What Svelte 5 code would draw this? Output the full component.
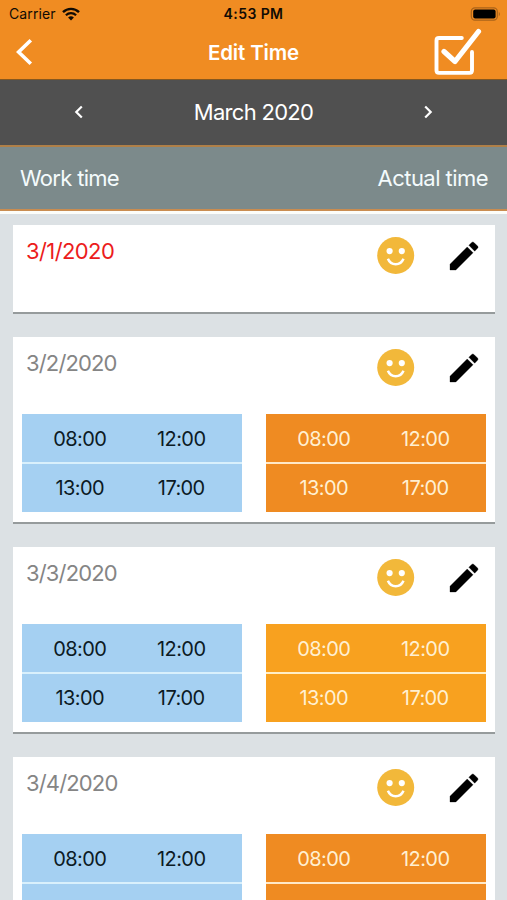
<script>
  const slots = [
    ['08:00', '12:00'],
    ['13:00', '17:00'],
  ];
  const days = [
    { date: '3/1/2020', holiday: true },
    { date: '3/2/2020', slots, tone: 'deep' },
    { date: '3/3/2020', slots, tone: 'bright' },
    { date: '3/4/2020', slots, tone: 'deep' },
  ];
</script>

{#snippet times(rows, tone)}
  <div class="times {tone}">
    {#each rows as row}
      <div class="row">
        {#each row as time}<span>{time}</span>{/each}
      </div>
    {/each}
  </div>
{/snippet}

<div class="screen">
  <header>
    <div class="status">
      <div class="carrier">
        <span class="name">Carrier</span>
        <svg width="18" height="14" viewBox="0 0 18 14" fill="none" stroke="#100b04">
          <path d="M1 5.2C5.5.7 12.5.7 17 5.2" stroke-width="2.4" />
          <path d="M3.9 8.2C6.8 5.4 11.2 5.4 14.1 8.2" stroke-width="2.2" />
          <path d="M9 13.5 6.1 10.5Q9 8.1 11.9 10.5Z" fill="#100b04" stroke="none" />
        </svg>
      </div>
      <span class="clock">4:53 PM</span>
      <svg class="battery" width="31" height="14" viewBox="0 0 31 14">
        <rect x="1.3" y=".8" width="26" height="12.4" rx="3.6" fill="none" stroke="#a9631a" stroke-width="1.2" />
        <rect x="3.2" y="2.4" width="22.4" height="9.2" rx="2" fill="#000" />
        <path d="M28.8 4.7q2.2 2.3 0 4.6z" fill="#a9631a" />
      </svg>
    </div>
    <div class="nav">
      <svg width="18" height="28" viewBox="0 0 18 28" fill="none" stroke="#fff" stroke-width="3.6">
        <path d="M15.8 2.2 3.6 14 15.8 25.8" />
      </svg>
      <h1>Edit Time</h1>
      <svg class="check" width="50" height="50" viewBox="0 0 50 50" fill="none" stroke="#fff" stroke-linecap="round" stroke-linejoin="round">
        <path d="M28.8 11H6Q3.500 11 3.500 13.500V43.200Q3.500 45.900 6 45.900H36.500Q39 45.900 39 43.200V25" stroke-width="3.9" />
        <path d="M11 24.500 22 34.500 45.500 4.500" stroke-width="5.2" />
      </svg>
    </div>
  </header>

  <div class="month">
    <svg width="10" height="14" viewBox="0 0 10 14" fill="none" stroke="#fff" stroke-width="2.2"><path d="M7.8 1.5 2.3 7l5.5 5.5" /></svg>
    <span>March 2020</span>
    <svg width="10" height="14" viewBox="0 0 10 14" fill="none" stroke="#fff" stroke-width="2.2"><path d="M2.2 1.5 7.7 7l-5.500 5.500" /></svg>
  </div>

  <div class="columns"><span>Work time</span><span class="actual">Actual time</span></div>

  <main>
    {#each days as day}
      <section class:short={!day.slots}>
        <div class="top">
          <span class="date" class:holiday={day.holiday}>{day.date}</span>
          <svg class="face" width="38" height="38" viewBox="0 0 38 38">
            <circle cx="18.7" cy="18.5" r="18.5" fill="#f2b83a" />
            <circle cx="12.6" cy="14.1" r="3.1" fill="#fff" />
            <circle cx="24.8" cy="14.1" r="3.1" fill="#fff" />
            <path d="M10.9 21.8Q13.2 27.3 18.7 27.3T26.5 21.8" fill="none" stroke="#fff" stroke-width="2.5" />
          </svg>
          <svg class="pencil" width="28" height="28" viewBox="3 3 18 18">
            <path d="M3 17.25V21h3.75L17.81 9.94l-3.75-3.75L3 17.25zM20.71 7.04a1 1 0 0 0 0-1.41l-2.34-2.34a1 1 0 0 0-1.41 0l-1.83 1.83 3.75 3.75 1.83-1.83z" stroke="#000" stroke-width=".2" />
          </svg>
        </div>
        {#if day.slots}
          <div class="blocks">
            {@render times(day.slots, 'planned')}
            {@render times(day.slots, day.tone)}
          </div>
        {/if}
      </section>
    {/each}
  </main>
</div>

<style>
  :global(body) {
    margin: 0;
    overflow: hidden;
  }
  .screen {
    box-sizing: border-box;
    width: 507px;
    height: 900px;
    overflow: hidden;
    background: #dce1e4;
    font-family: Inter, Roboto, sans-serif;
    display: flex;
    flex-direction: column;
  }
  svg {
    display: block;
    flex: none;
  }
  header {
    flex: none;
    box-sizing: border-box;
    height: 80px;
    background: #f08c22;
    border-bottom: 1px solid #86581f;
  }
  .status {
    display: grid;
    grid-template-columns: 1fr auto 1fr;
    align-items: center;
    height: 27px;
    padding: 0 7px 0 9px;
    color: #100b04;
  }
  .carrier {
    display: flex;
    align-items: center;
    gap: 6px;
  }
  .name {
    font-size: 14px;
    line-height: 27px;
    letter-spacing: 0.1px;
  }
  .clock {
    font-size: 14px;
    font-weight: 600;
    line-height: 27px;
    letter-spacing: 0.4px;
    margin-right: 2px;
  }
  .battery {
    justify-self: end;
    margin-right: -1px;
  }
  .nav {
    display: grid;
    grid-template-columns: 1fr auto 1fr;
    align-items: center;
    height: 50px;
    padding: 0 24px 0 15px;
  }
  h1 {
    margin: 0 -9px 0 0;
    color: #fff;
    font-size: 20.5px;
    font-weight: 600;
    letter-spacing: -0.15px;
  }
  .check {
    justify-self: end;
  }
  .month {
    flex: none;
    box-sizing: border-box;
    height: 67px;
    padding: 0 74px 2px;
    display: flex;
    align-items: center;
    justify-content: space-between;
    background: #505050;
    border-bottom: 2px solid #b08048;
    color: #fff;
    font-size: 22px;
    letter-spacing: -0.7px;
  }
  .columns {
    flex: none;
    box-sizing: border-box;
    height: 64px;
    padding: 0 19px 0 20px;
    display: flex;
    align-items: center;
    justify-content: space-between;
    background: #7c8a8b;
    border-bottom: 2px solid #c98c50;
    color: #f4fbfc;
    font-size: 22px;
    letter-spacing: -0.7px;
  }
  .actual {
    letter-spacing: -0.55px;
  }
  main {
    flex: 1;
    min-height: 0;
    padding: 11px 12px 0 13px;
    border-top: 3px solid #fcfdf9;
    display: flex;
    flex-direction: column;
    gap: 23px;
  }
  section {
    flex: none;
    box-sizing: border-box;
    height: 187px;
    background: #fff;
    border-bottom: 2px solid #969b9c;
  }
  section.short {
    height: 89px;
  }
  .top {
    display: flex;
    align-items: flex-start;
    height: 77px;
    padding: 0 17px 0 13px;
  }
  .date {
    flex: 1;
    margin-top: 11px;
    font-size: 22px;
    line-height: 30px;
    letter-spacing: -0.85px;
    color: #858585;
  }
  .date.holiday {
    color: #ec1c1c;
    letter-spacing: -0.6px;
  }
  .face {
    margin-top: 12px;
  }
  .pencil {
    margin: 17px 0 0 35px;
    overflow: visible;
  }
  .blocks {
    display: flex;
    justify-content: space-between;
    padding: 0 9px;
  }
  .times {
    width: 220px;
    display: flex;
    flex-direction: column;
    gap: 2px;
  }
  .row {
    box-sizing: border-box;
    height: 48px;
    padding: 1px 10px 0 7px;
    display: grid;
    grid-template-columns: 1fr 1fr;
    align-items: center;
    text-align: center;
    font-size: 20px;
    letter-spacing: -0.6px;
    color: #fff0d2;
  }
  .row:last-child {
    height: 47.5px;
    padding-top: 0;
  }
  .planned { background: #d9f0fc; }
  .planned .row { background: #a5d0f2; color: #0c1a24; }
  .deep { background: #ffe9c8; }
  .deep .row { background: #ef8b22; }
  .bright { background: #ffefc8; }
  .bright .row { background: #f8a11f; }
</style>
